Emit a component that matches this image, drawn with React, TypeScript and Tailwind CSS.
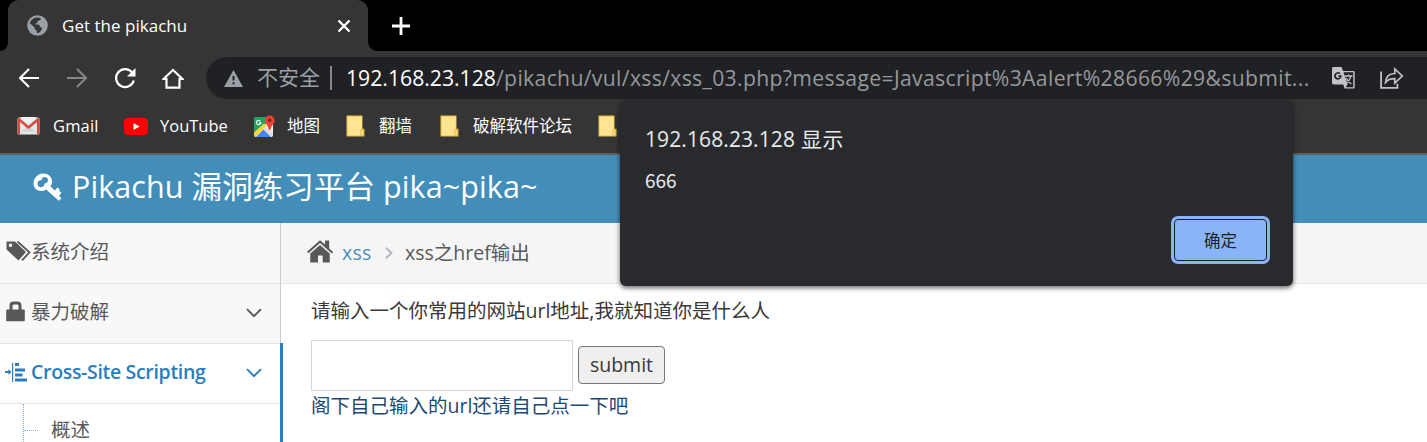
import type { ReactNode } from "react";

const UI = "font-['Open_Sans','Noto_Sans_CJK_SC',sans-serif]";

function Globe() {
  return (
    <svg className="block h-[21px] w-[21px]" viewBox="0 0 21 21">
      <circle cx="10.5" cy="10.5" r="10.3" fill="#9aa0a6" />
      <path
        d="M10.2 2.4C11.4 2.5 12.8 2.8 14 3.400c-.2 1.200-.8 1.900-2 2.100-1.300.200-1.600.800-1.700 1.700-.1 1-1 1.300-2 1.300-.5 0-.4.900.2 1.100h2.600c1.100.1 1.500.800 1.600 1.700.1.700.6 1 1.300 1 .8 0 1.100.5.900 1.200-.2.900-.3 1.600-1.300 2.700-.8 1-2.100 1.900-3.700 2.100l-.1-2.100c0-.9-.6-1.200-1.300-1.500-.8-.4-.9-1.200-.9-2.100L2.900 8.200C3.800 4.900 6.700 2.500 10.200 2.400z"
        fill="#353535"
      />
    </svg>
  );
}

function Gmail() {
  return (
    <svg className="block h-[18px] w-[23px]" viewBox="0 0 23 18">
      <rect x="0.500" y="0.500" width="22" height="17" rx="1.500" fill="#e8e8e8" />
      <path d="M4 15 11.500 8.500 19 15z" fill="#d5d5d5" />
      <path d="M1.800 17V2.300L11.500 10.500 21.200 2.300V17" fill="none" stroke="#d54b3d" strokeWidth="2.500" strokeLinejoin="round" />
      <path d="M3.500 0h16L11.500 7z" fill="#f2f2f2" />
    </svg>
  );
}

function YouTube() {
  return (
    <svg className="block h-[17px] w-[24px]" viewBox="0 0 24 17">
      <rect width="24" height="17" rx="4" fill="#f00" />
      <path d="M9.500 5v7l6.200-3.500z" fill="#fff" />
    </svg>
  );
}

function Maps() {
  return (
    <svg className="block h-[23px] w-[23px]" viewBox="0 0 23 23">
      <rect x="1" y="2" width="19" height="20" rx="1.500" fill="#1fa463" />
      <path d="M1 20.500 18.500 3H20v17.500L18.500 22H2.500z" fill="#f1f1f1" />
      <path d="M1 17.500 11 8.500l2.500 2.500L2.500 22 1 20.500z" fill="#fdd835" />
      <path d="m3 22 7.500-7.500L18 22z" fill="#4285f4" />
      <path d="M13 11.500 20 18.500V20.500L18.500 22 10.500 14z" fill="#dedede" />
      <path d="M8.500 7.200H6v1.200h1.100a1.600 1.600 0 1 1-.3-2l.9-.9a2.800 2.800 0 1 0 .8 1.700z" fill="#fff" />
      <path d="M16.700 0.500a4.900 4.900 0 0 1 4.900 4.900c0 3.600-3.400 4.600-4.300 9.600h-1.200c-.9-5-4.300-6-4.300-9.600A4.900 4.900 0 0 1 16.700.5z" fill="#e94335" />
      <circle cx="16.700" cy="5.400" r="1.800" fill="#8c231b" />
    </svg>
  );
}

function Folder() {
  return (
    <svg className="block h-[22px] w-[20px]" viewBox="0 0 20 22">
      <path d="M.5.5h16v13.300h2v7.700h-18z" fill="#e5bd45" />
      <path d="M1.500 1.500h14.300v13h-1.300v6h-13z" fill="#ffe591" />
      <path d="M15.500 15.500h1.500v4.500h-1.500z" fill="#ffe591" />
    </svg>
  );
}

function Bookmark({ width, gap, icon, label }: { width: string; gap: string; icon: ReactNode; label: ReactNode }) {
  return (
    <div className={`flex shrink-0 items-center ${width}`}>
      <div className={`shrink-0 ${gap}`}>{icon}</div>
      {label}
    </div>
  );
}

function Chevron() {
  return (
    <svg className="mt-[-2px] block h-[10px] w-[16px]" viewBox="0 0 16 10">
      <path d="m1 1.200 7 7 7-7" fill="none" stroke="currentColor" strokeWidth="1.900" />
    </svg>
  );
}

function TabStrip() {
  return (
    <div className="flex h-[51px] bg-black">
      <svg className="mt-[41px] h-[10px] w-[8px]" viewBox="0 0 8 10">
        <path d="M8 0v10H0c5 0 8-4 8-10z" fill="#353535" />
      </svg>
      <div className="flex w-[360px] items-center rounded-t-[11px] bg-[#353535] pl-[19px]">
        <Globe />
        <span className="mt-[1px] ml-[14px] w-[275px] text-[17px] tracking-[0.020px] text-white">Get the pikachu</span>
        <svg className="h-[14px] w-[14px]" viewBox="0 0 14 14">
          <path d="m1.500 1.500 11 11m0-11-11 11" stroke="#fff" strokeWidth="2.400" />
        </svg>
      </div>
      <svg className="mt-[41px] h-[10px] w-[10px]" viewBox="0 0 10 10">
        <path d="M0 0v10h10C4 10 0 6 0 0z" fill="#353535" />
      </svg>
      <svg className="mt-[16px] ml-[13px] h-[20px] w-[20px]" viewBox="0 0 20 20">
        <path d="M10 1v18M1 10h18" stroke="#fff" strokeWidth="2.800" />
      </svg>
    </div>
  );
}

function AddressRow() {
  return (
    <div className="flex h-[54px] items-center pl-[18px]">
      <svg className="h-[20px] w-[22px] shrink-0" viewBox="0 0 22 20">
        <path d="M21 10H2.500M11 1 2 10l9 9" fill="none" stroke="#fff" strokeWidth="2.100" />
      </svg>
      <svg className="ml-[26px] h-[20px] w-[22px] shrink-0" viewBox="0 0 22 20">
        <path d="M1 10h18.500M11 1l9 9-9 9" fill="none" stroke="#868686" strokeWidth="2.100" />
      </svg>
      <svg className="ml-[26px] h-[22px] w-[23px] shrink-0" viewBox="0 0 23 22">
        <path d="M18 5.200A9 9 0 1 0 19.800 13.500" fill="none" stroke="#fff" strokeWidth="2.300" />
        <path d="M21.500 1v8.500H13z" fill="#fff" />
      </svg>
      <svg className="mt-[2px] ml-[25px] h-[22px] w-[22px] shrink-0" viewBox="0 0 22 22">
        <path d="M1.500 11 11 2l9.500 9H17.500v8.700h-13V11z" fill="none" stroke="#fff" strokeWidth="2.200" />
      </svg>
      <div className="ml-[22px] flex h-[42px] min-w-0 flex-1 items-center rounded-l-full bg-[#202124] pl-[18px]">
        <svg className="mt-[1px] h-[17px] w-[19px] shrink-0" viewBox="0 0 19 17">
          <path d="M9.500 0 19 17H0z" fill="#9aa0a6" />
          <path d="M8.500 6h2v4.500h-2zM8.500 12.300h2v2h-2z" fill="#202124" />
        </svg>
        <span className="ml-[14px] w-[73px] shrink-0 text-[21px] text-[#9aa0a6]">不安全</span>
        <div className="h-[24px] w-[2px] shrink-0 bg-[#85878a]" />
        <div className="ml-[14px] flex w-[986px] shrink-0 text-[21.200px] whitespace-nowrap text-[#96989b]">
          <span className="w-[150px] shrink-0 text-white">192.168.23.128</span>
          <span className="tracking-[0.330px]">/pikachu/vul/xss/xss_03.php?message=Javascript%3Aalert%28666%29&amp;submit...</span>
        </div>
        <svg className="h-[22px] w-[23px] shrink-0" viewBox="0 0 23 22">
          <path d="M1.500 0h8l1.500 4h10.500a1.200 1.200 0 0 1 1.200 1.200v15a1.200 1.200 0 0 1-1.200 1.200h-9l-1.200-4H1.500A1.500 1.500 0 0 1 0 16V1.500A1.500 1.500 0 0 1 1.500 0z" fill="#c2c3c4" />
          <path d="M11.500 5.200h9.700v15h-7.500l2-3z" fill="#202124" />
          <path d="M9.600 8.300H6.300v1.500h1.600a2.100 2.100 0 1 1-.5-2.500l1.100-1.100a3.800 3.800 0 1 0 1.100 2.100z" fill="#202124" />
          <path d="M13 9h7.500M16.500 7.500V9m2.500 0c-.8 3-2.500 5.500-4.500 7m-.2-5c1 2.200 3 4.500 5 6" fill="none" stroke="#c2c3c4" strokeWidth="1.300" />
        </svg>
        <svg className="ml-[25px] h-[22px] w-[24px] shrink-0" viewBox="0 0 24 22">
          <path d="M1.100 4.500v16.300h16.300v-4" fill="none" stroke="#c2c3c4" strokeWidth="1.800" />
          <path d="M5.500 15.500c.3-5.500 3.500-8.800 9.300-9V2l7.500 7-7.500 7v-4.300c-4-.1-7 1-9.300 3.800z" fill="none" stroke="#c2c3c4" strokeWidth="1.700" />
        </svg>
      </div>
    </div>
  );
}

function Bookmarks() {
  return (
    <div className="flex h-[42px] items-center pl-[17px] text-[16.500px] whitespace-nowrap text-white">
      <Bookmark width="w-[107px]" gap="w-[36px]" icon={<Gmail />} label={<span className="tracking-[0.150px]">Gmail</span>} />
      <Bookmark width="w-[129px]" gap="w-[36px]" icon={<YouTube />} label={<span>YouTube</span>} />
      <Bookmark width="w-[93px]" gap="w-[34px]" icon={<Maps />} label={<span>地图</span>} />
      <Bookmark width="w-[94px]" gap="w-[33px]" icon={<Folder />} label={<span>翻墙</span>} />
      <Bookmark width="w-[158px]" gap="w-[33px]" icon={<Folder />} label={<span>破解软件论坛</span>} />
      <Bookmark width="w-[22px]" gap="w-[22px]" icon={<Folder />} label={null} />
    </div>
  );
}

function Sidebar() {
  return (
    <div className="flex w-[283px] shrink-0 flex-col text-[19.500px] whitespace-nowrap text-[#585858]">
      <div className="mr-[2px] h-[120px] border-r border-[#ccc] bg-[#f8f8f8]">
        <div className="flex h-[61px] items-center border-b border-[#e5e5e5] pl-[6px]">
          <svg className="mt-[-4px] h-[20px] w-[25px]" viewBox="0 0 25 20">
            <path fillRule="evenodd" d="M.5.500h8.500L20 11 12.500 19.500.5 8.500zM4.500 2.500a1.800 1.800 0 1 0 0 3.600 1.800 1.800 0 0 0 0-3.600z" fill="#585858" />
            <path d="M11.500.500 23.500 11.300 16 19.300" fill="none" stroke="#585858" strokeWidth="1.800" />
          </svg>
          <span className="mt-[-3px]">系统介绍</span>
        </div>
        <div className="flex h-[59px] items-center pl-[6px]">
          <svg className="mt-[-4px] h-[21px] w-[19px]" viewBox="0 0 19 21">
            <path fillRule="evenodd" d="M1 8.500h2.500V4.500C3.500 2 5 .500 7.500.500h4C14 .500 15.500 2 15.500 4.500v4H18a.8.8 0 0 1 .8.8v10.200a.8.8 0 0 1-.8.8H1a.8.8 0 0 1-.8-.8V9.300a.8.8 0 0 1 .8-.8zm5.500 0h6V5c0-1-.5-1.600-1.500-1.600H8C7 3.400 6.500 4 6.500 5z" fill="#585858" />
          </svg>
          <span className="mt-[-3px] ml-[6px] w-[215px]">暴力破解</span>
          <Chevron />
        </div>
      </div>
      <div className="min-h-0 flex-1 border-r-[3px] border-[#2b7dbc] bg-white">
        <div className="flex h-[61px] items-center border-y border-[#e5e5e5] pl-[5px] text-[#2b7dbc]">
          <svg className="mt-[-3px] h-[19px] w-[22px]" viewBox="0 0 22 19" fill="currentColor">
            <path d="M0 8h3.500V6L6.500 9l-3 3v-2H0zM7 0h1.200v19H7zM10 0h4v3h-4zM10 5.500h10v3H10zM10 10.500h7.500v3H10zM10 15.500h12v3H10z" />
          </svg>
          <span className="mt-[-3px] ml-[4px] w-[215px] font-semibold tracking-[-0.320px]">Cross-Site Scripting</span>
          <Chevron />
        </div>
        <div className="flex h-[38px] pl-[23px]">
          <div className="h-[38px] w-[1px] border-l border-dotted border-[#8db0cc]" />
          <div className="mt-[26px] h-[1px] w-[14px] border-t border-dotted border-[#8db0cc]" />
          <span className="mt-[12px] ml-[13px] h-[26px] leading-[27px]">概述</span>
        </div>
      </div>
    </div>
  );
}

function Content() {
  return (
    <div className="-ml-[2px] flex min-w-0 flex-1 flex-col text-[19.500px] whitespace-nowrap">
      <div className="flex h-[61px] shrink-0 items-center border-b border-[#e5e5e5] bg-[#f5f5f5] pl-[25px] text-[#585858]">
        <svg className="mt-[-3px] h-[23px] w-[28px]" viewBox="0 0 27 23" fill="#585858">
          <path d="m.5 11.800 13-11.500 5 4.300V.5h4.200V8.500l4 3.500-1.300 1.400L13.500 3.100 1.900 13.300z" />
          <path d="m13.500 5.100 9.700 8.400V22.500h-7v-7h-4.700v7H3.800v-9z" />
        </svg>
        <span className="ml-[8px] w-[43px] tracking-[0.200px] text-[#4c8fbd]">xss</span>
        <svg className="h-[12px] w-[8px]" viewBox="0 0 8 12">
          <path d="m1 .8 5.500 5.200L1 11.200" fill="none" stroke="#b2b6bf" strokeWidth="1.900" />
        </svg>
        <span className="ml-[12px]">xss之href输出</span>
      </div>
      <div className="flex flex-col items-start pl-[30px]">
        <p className="mt-[11px] h-[32px] leading-[32px] text-[#393939]">请输入一个你常用的网站url地址,我就知道你是什么人</p>
        <div className="mt-[13px] flex items-start">
          <input className="h-[51px] w-[262px] border border-[#d5d5d5] bg-white" />
          <button className="mt-[6px] ml-[5px] h-[38px] w-[87px] rounded-[4px] border border-[#767676] bg-[#efefef] leading-[34px] text-[#393939]">
            submit
          </button>
        </div>
        <a className="mt-[-1px] h-[32px] leading-[32px] text-[#1b4a76]">阁下自己输入的url还请自己点一下吧</a>
      </div>
    </div>
  );
}

function AlertDialog() {
  return (
    <div className="absolute top-[100px] left-[620px] flex h-[186px] w-[673px] flex-col rounded-[6px] bg-[#292a2d] pr-[24px] pl-[25px] whitespace-nowrap text-[#e8eaed] shadow-[0_2px_5px_0_rgba(0,0,0,0.600)]">
      <div className="mt-[23px] flex h-[32px] text-[21px] leading-[32px] tracking-[0.100px]">
        <span className="w-[156px]">192.168.23.128</span>
        <span className="tracking-[0.500px]">显示</span>
      </div>
      <div className="mt-[13px] h-[24px] font-['Noto_Sans_CJK_SC',sans-serif] text-[19px] leading-[24px]">666</div>
      <button className="mt-[27px] mr-[2px] h-[42px] w-[93px] self-end rounded-[4px] border border-[#202124] bg-[#8ab4f8] text-[16.500px] leading-[42px] text-[#202124] ring-[3px] ring-[#8ab4f8]">
        确定
      </button>
    </div>
  );
}

export default function App() {
  return (
    <div className={`relative flex h-[442px] w-[1427px] flex-col overflow-hidden bg-white ${UI}`}>
      <TabStrip />
      <div className="h-[104px] shrink-0 border-b-2 border-[#5f5f5f] bg-[#353535]">
        <AddressRow />
        <Bookmarks />
      </div>
      <div className="flex h-[68px] shrink-0 items-center bg-[#438eb9] pl-[33px] text-[30.500px] whitespace-nowrap text-white">
        <svg className="mt-[-4px] h-[28px] w-[30px]" viewBox="0 0 30 28">
          <path
            fillRule="evenodd"
            d="M10 .5C15.500.500 19 4 19 8.500c0 2-.6 3.500-1.500 5l4.200 4 2.800-3 2.300 2 -.8 1 2.500 2.500-2.500 2.800 2.500 2.400-2.700 2.600L13.200 16.500C12 17.300 10.500 18 8.500 18 3.500 18 .5 14.800.5 10.500.5 5 5 .5 10 .5zM11.500 4C9.500 4 8.800 5.200 8.800 7 6.500 6.800 4.500 8 4.500 10.500s1.500 3.700 3.500 3.700 3.500-1.500 3.600-3.700c2-.1 3.400-1.300 3.400-3.300S13.500 4 11.500 4z"
            fill="#fff"
          />
        </svg>
        <span className="mt-[-4px] ml-[9px] tracking-[0.080px]">Pikachu 漏洞练习平台 pika~pika~</span>
      </div>
      <div className="flex min-h-0 flex-1">
        <Sidebar />
        <Content />
      </div>
      <AlertDialog />
    </div>
  );
}
